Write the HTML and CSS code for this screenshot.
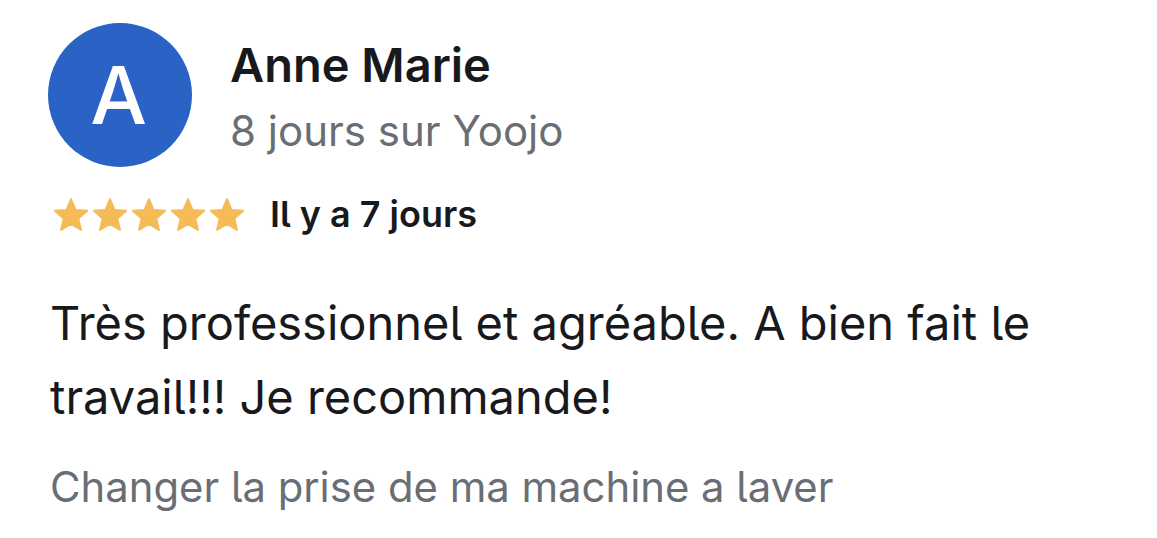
FILE: index.html
```html
<!DOCTYPE html>
<html lang="fr">
<head>
    <meta charset="UTF-8">
    <meta name="viewport" content="width=device-width, initial-scale=1.0">
    <title>Avis client</title>
    <link rel="stylesheet" href="styles.css">
</head>
<body>
    <div class="review">
        <div class="review-header">
            <div class="avatar">A</div>
            <div class="author">
                <div class="author-name">Anne Marie</div>
                <div class="author-meta">8 jours sur Yoojo</div>
            </div>
        </div>

        <div class="rating">
            <div class="stars">
                <svg class="star" viewBox="1.5 1.5 21 20"><path d="M12 17.27L18.18 21l-1.64-7.03L22 9.24l-7.19-.61L12 2 9.19 8.63 2 9.24l5.46 4.73L5.82 21z"/></svg>
                <svg class="star" viewBox="1.5 1.5 21 20"><path d="M12 17.27L18.18 21l-1.64-7.03L22 9.24l-7.19-.61L12 2 9.19 8.63 2 9.24l5.46 4.73L5.82 21z"/></svg>
                <svg class="star" viewBox="1.5 1.5 21 20"><path d="M12 17.27L18.18 21l-1.64-7.03L22 9.24l-7.19-.61L12 2 9.19 8.63 2 9.24l5.46 4.73L5.82 21z"/></svg>
                <svg class="star" viewBox="1.5 1.5 21 20"><path d="M12 17.27L18.18 21l-1.64-7.03L22 9.24l-7.19-.61L12 2 9.19 8.63 2 9.24l5.46 4.73L5.82 21z"/></svg>
                <svg class="star" viewBox="1.5 1.5 21 20"><path d="M12 17.27L18.18 21l-1.64-7.03L22 9.24l-7.19-.61L12 2 9.19 8.63 2 9.24l5.46 4.73L5.82 21z"/></svg>
            </div>
            <span class="rating-date">Il y a 7 jours</span>
        </div>

        <p class="review-text">Très professionnel et agréable. A bien fait le travail!!! Je recommande!</p>

        <p class="review-task">Changer la prise de ma machine a laver</p>
    </div>
</body>
</html>
```

FILE: styles.css
```css
body {
    font-family: Inter, 'Noto Sans', sans-serif;
    font-feature-settings: 'cv05';
    background-color: #fff;
    color: #18191c;
    margin: 0;
    padding: 0;
}

.review {
    padding: 23px 40px 0 48px;
}

.review-header {
    display: flex;
    align-items: center;
    gap: 38px;
}

.avatar {
    width: 144px;
    height: 144px;
    border-radius: 50%;
    background-color: #2b62c5;
    color: #fff;
    font-size: 80px;
    font-weight: 500;
    line-height: 1;
    padding-right: 3px;
    box-sizing: border-box;
    display: flex;
    justify-content: center;
    align-items: center;
    flex-shrink: 0;
}

.author {
    padding-top: 6px;
}

.author-name {
    font-size: 47px;
    font-weight: 600;
    line-height: 56px;
}

.author-meta {
    font-size: 42px;
    color: #6a6e74;
    line-height: 56px;
    margin-top: 10px;
}

.rating {
    display: flex;
    align-items: center;
    gap: 26px;
    margin-top: 25px;
}

.stars {
    display: flex;
    gap: 5px;
    padding-left: 6px;
}

.star {
    width: 34px;
    height: 33px;
    fill: #f4bb57;
    stroke: #f4bb57;
    stroke-width: 1.2;
    stroke-linejoin: round;
}

.rating-date {
    font-size: 36px;
    font-weight: 600;
}

.review-text {
    font-size: 47px;
    line-height: 74px;
    margin: 50px 0 0 2px;
}

.review-task {
    font-size: 41.8px;
    color: #6a6e74;
    margin: 28px 0 0 2px;
}
```
